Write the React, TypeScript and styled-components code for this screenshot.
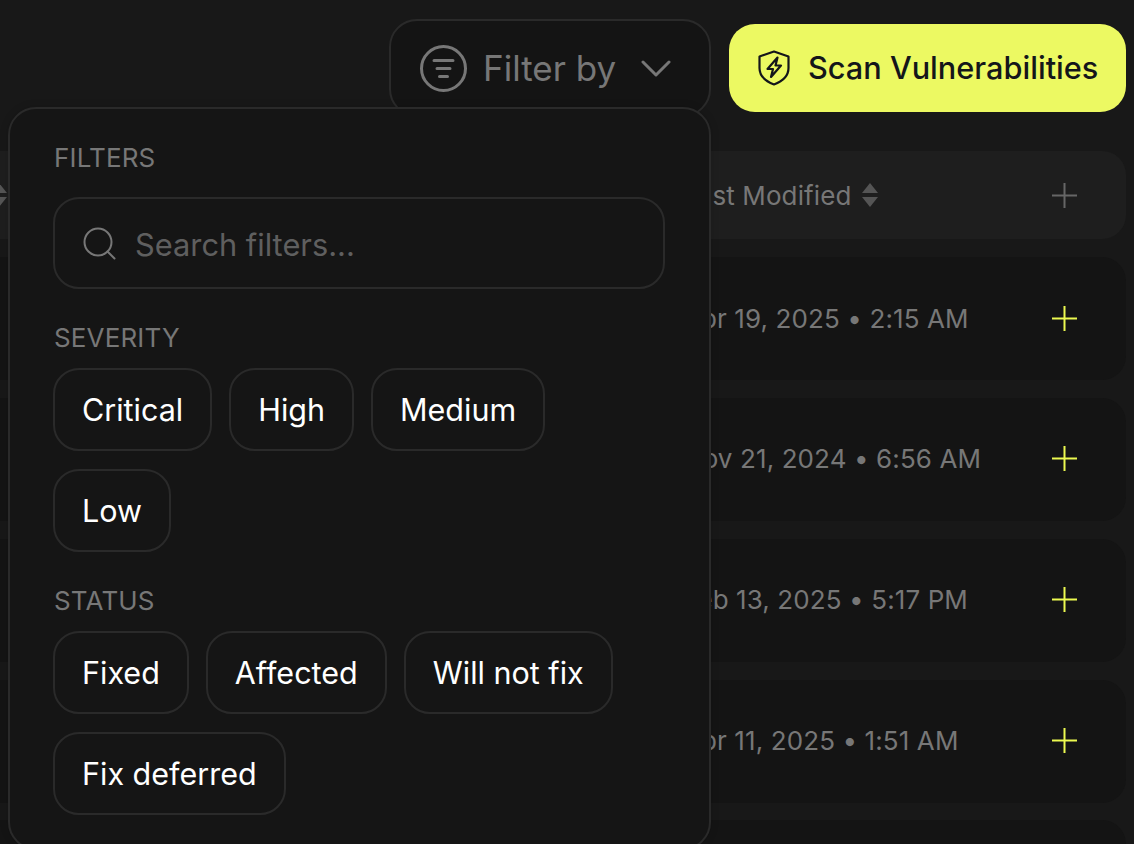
import * as React from 'react';
import styled, { createGlobalStyle } from 'styled-components';

const dates = [
    'Apr 19, 2025 • 2:15 AM',
    'Nov 21, 2024 • 6:56 AM',
    'Feb 13, 2025 • 5:17 PM',
    'Apr 11, 2025 • 1:51 AM',
];

const severities = ['Critical', 'High', 'Medium', 'Low'];
const statuses = ['Fixed', 'Affected', 'Will not fix', 'Fix deferred'];

const SortIcon = () => (
    <svg width="16" height="24" viewBox="0 0 16 24" fill="#555555">
        <path d="M8 0 L16 10 H0 Z" />
        <path d="M0 14 H16 L8 24 Z" />
    </svg>
);

const PlusIcon = ({ color }: { color: string }) => (
    <svg width="25" height="25" viewBox="0 0 25 25" stroke={color} strokeWidth="2" fill="none">
        <path d="M0 12.5 H25 M12.5 0 V25" />
    </svg>
);

const FilterIcon = () => (
    <svg width="47" height="47" viewBox="0 0 47 47" fill="none" stroke="#777777" strokeWidth="3" strokeLinecap="round">
        <circle cx="23.5" cy="23.5" r="22" />
        <path d="M14 15.5 H33 M17 23.5 H30 M19.5 31.5 H27.5" />
    </svg>
);

const ChevronIcon = () => (
    <svg width="30" height="17" viewBox="0 0 30 17" fill="none" stroke="#777777" strokeWidth="3" strokeLinecap="round" strokeLinejoin="round">
        <path d="M2 2 L15 15 L28 2" />
    </svg>
);

const ShieldIcon = () => (
    <svg width="32" height="36" viewBox="0 0 32 36" fill="none" stroke="#14161a" strokeWidth="2.2" strokeLinejoin="round">
        <path d="M16 1.5 L30.5 6.5 V18 C30.5 26 24 31.5 16 34.5 C8 31.5 1.5 26 1.5 18 V6.5 Z" />
        <path d="M19.5 7.5 L9.5 19 H15 L13 27 L23 15.5 H17.5 Z" />
    </svg>
);

const SearchIcon = () => (
    <svg width="33" height="33" viewBox="0 0 33 33" fill="none" stroke="#777777" strokeWidth="2" strokeLinecap="round">
        <circle cx="15" cy="15" r="13.5" />
        <path d="M24.5 24.5 L31.5 31.5" />
    </svg>
);

const App = () => {
    return (
        <Page>
            <GlobalStyle />
            <Toolbar>
                <FilterButton>
                    <FilterIcon />
                    <FilterLabel>Filter by</FilterLabel>
                    <ChevronIcon />
                </FilterButton>
                <ScanButton>
                    <ShieldIcon />
                    Scan Vulnerabilities
                </ScanButton>
            </Toolbar>
            <Table>
                <HeaderRow>
                    <FirstHeaderCell>
                        <SortIcon />
                    </FirstHeaderCell>
                    <DateCell>
                        Last Modified
                        <SortIcon />
                    </DateCell>
                    <PlusIcon color="#666666" />
                </HeaderRow>
                {dates.map((date) => (
                    <Row key={date}>
                        <DateCell>{date}</DateCell>
                        <PlusIcon color="#ecf950" />
                    </Row>
                ))}
                <Row />
            </Table>
            <Panel>
                <SectionLabel>FILTERS</SectionLabel>
                <SearchBox>
                    <SearchIcon />
                    <SearchInput placeholder="Search filters..." />
                </SearchBox>
                <SectionLabel $spaced>SEVERITY</SectionLabel>
                <ChipList>
                    {severities.map((name) => (
                        <Chip key={name}>{name}</Chip>
                    ))}
                </ChipList>
                <SectionLabel $spaced>STATUS</SectionLabel>
                <ChipList>
                    {statuses.map((name) => (
                        <Chip key={name}>{name}</Chip>
                    ))}
                </ChipList>
            </Panel>
        </Page>
    );
};

const GlobalStyle = createGlobalStyle`
    html, body {
        margin: 0;
        background: #181818;
    }
    * {
        box-sizing: border-box;
    }
`;

const Page = styled.div`
    position: relative;
    width: 1134px;
    height: 844px;
    overflow: hidden;
    background: #181818;
    font-family: Inter, "Liberation Sans", sans-serif;
`;

const Toolbar = styled.div`
    display: flex;
    justify-content: flex-end;
    align-items: center;
    gap: 18px;
    padding: 19px 8px 0 0;
`;

const FilterButton = styled.div`
    display: flex;
    align-items: center;
    width: 322px;
    height: 98px;
    padding: 0 38px 0 29px;
    background: #141414;
    border: 2px solid #2a2a2a;
    border-radius: 28px;
`;

const FilterLabel = styled.span`
    flex: 1;
    margin-left: 16px;
    font-size: 35px;
    color: #777777;
`;

const ScanButton = styled.div`
    display: flex;
    align-items: center;
    gap: 18px;
    width: 397px;
    height: 88px;
    padding: 0 0 1px 29px;
    background: #ecf962;
    border-radius: 26px;
    font-size: 30.7px;
    font-weight: 500;
    color: #14161a;
`;

const Table = styled.div`
    display: flex;
    flex-direction: column;
    gap: 17.75px;
    margin: 34px 8px 0 -40px;
`;

const HeaderRow = styled.div`
    display: flex;
    align-items: center;
    height: 88px;
    margin-bottom: 0.5px;
    padding-right: 49px;
    background: #1e1e1e;
    border-radius: 24px;
`;

const FirstHeaderCell = styled.div`
    display: flex;
    flex: 1;
    padding-left: 31px;
`;

const Row = styled.div`
    display: flex;
    flex-shrink: 0;
    justify-content: flex-end;
    align-items: center;
    height: 123px;
    padding: 0 49px 1.5px 0;
    background: #141414;
    border-radius: 24px;
`;

const DateCell = styled.div`
    display: flex;
    align-items: center;
    gap: 11px;
    width: 369px;
    font-size: 26px;
    letter-spacing: 0.1px;
    color: #777777;
    white-space: nowrap;
`;

const Panel = styled.div`
    position: absolute;
    top: 107px;
    left: 8px;
    display: flex;
    flex-direction: column;
    width: 703px;
    height: 743px;
    padding: 33px 44px 0 43px;
    background: #151515;
    border: 2px solid #2a2a2a;
    border-radius: 28px;
    box-shadow: 0 0 8px rgba(0, 0, 0, 0.15);
`;

const SectionLabel = styled.div<{ $spaced?: boolean }>`
    margin-top: ${(props) => (props.$spaced ? '33px' : '0')};
    margin-bottom: ${(props) => (props.$spaced ? '14px' : '23px')};
    padding-left: 1px;
    font-size: 26px;
    letter-spacing: 0.15px;
    line-height: 32px;
    color: #777777;
`;

const SearchBox = styled.div`
    display: flex;
    flex-shrink: 0;
    align-items: center;
    gap: 19px;
    height: 92px;
    padding: 0 28px;
    border: 2px solid #2a2a2a;
    border-radius: 26px;
`;

const SearchInput = styled.input`
    flex: 1;
    min-width: 0;
    padding: 3px 0 0;
    background: transparent;
    border: none;
    outline: none;
    font-family: inherit;
    font-size: 30.8px;
    color: #ffffff;

    &::placeholder {
        color: #5f5f5f;
        opacity: 1;
    }
`;

const ChipList = styled.div`
    display: flex;
    flex-shrink: 0;
    flex-wrap: wrap;
    gap: 18px 17px;
`;

const Chip = styled.div`
    display: flex;
    align-items: center;
    height: 83px;
    padding: 0 27px 1px;
    border: 2px solid #2a2a2a;
    border-radius: 26px;
    font-size: 30.5px;
    color: #ffffff;
`;

export default App;
